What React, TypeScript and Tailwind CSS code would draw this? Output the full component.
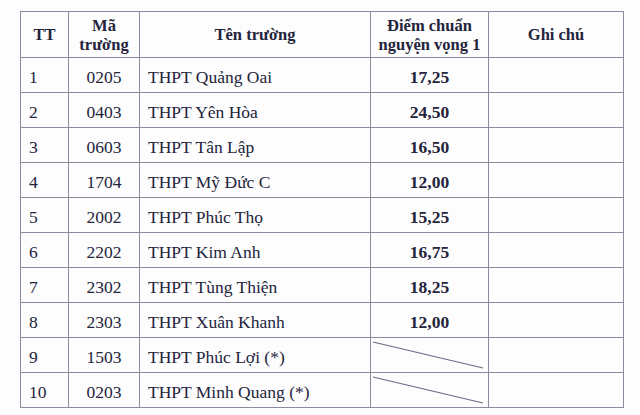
import React from "react";

const rows: { tt: string; ma: string; ten: string; diem: string | null }[] = [
  { tt: "1", ma: "0205", ten: "THPT Quảng Oai", diem: "17,25" },
  { tt: "2", ma: "0403", ten: "THPT Yên Hòa", diem: "24,50" },
  { tt: "3", ma: "0603", ten: "THPT Tân Lập", diem: "16,50" },
  { tt: "4", ma: "1704", ten: "THPT Mỹ Đức C", diem: "12,00" },
  { tt: "5", ma: "2002", ten: "THPT Phúc Thọ", diem: "15,25" },
  { tt: "6", ma: "2202", ten: "THPT Kim Anh", diem: "16,75" },
  { tt: "7", ma: "2302", ten: "THPT Tùng Thiện", diem: "18,25" },
  { tt: "8", ma: "2303", ten: "THPT Xuân Khanh", diem: "12,00" },
  { tt: "9", ma: "1503", ten: "THPT Phúc Lợi (*)", diem: null },
  { tt: "10", ma: "0203", ten: "THPT Minh Quang (*)", diem: null },
];

export default function App() {
  return (
    <div
      className="w-[640px] h-[415px] bg-[#fdfdfd] text-[#24243c] overflow-hidden pt-[11px] pl-[20px]"
      style={{ fontFamily: '"Liberation Serif", "Times New Roman", serif' }}
    >
      <div className="w-[604px] border-l border-r border-t border-[#8a8a9e]">
        <div className="flex h-[46px] border-b border-[#8a8a9e] font-bold text-[16.5px] leading-[19px]">
          <div className="w-[48px] border-r border-[#8a8a9e] flex items-center justify-center">TT</div>
          <div className="w-[71px] border-r border-[#8a8a9e] flex items-center justify-center text-center">
            Mã<br />trường
          </div>
          <div className="w-[231px] border-r border-[#8a8a9e] flex items-center justify-center">Tên trường</div>
          <div className="w-[118px] border-r border-[#8a8a9e] flex items-center justify-center text-center">
            Điểm chuẩn<br />nguyện vọng 1
          </div>
          <div className="w-[134px] flex items-center justify-center">Ghi chú</div>
        </div>
        {rows.map((r) => (
          <div key={r.tt} className="flex h-[35px] border-b border-[#8a8a9e] text-[17.5px] leading-[20px]">
            <div className="w-[48px] border-r border-[#8a8a9e] flex items-center pl-2 pt-[4px]">{r.tt}</div>
            <div className="w-[71px] border-r border-[#8a8a9e] flex items-center justify-center pt-[4px]">{r.ma}</div>
            <div className="w-[231px] border-r border-[#8a8a9e] flex items-center pl-2 pt-[4px]">{r.ten}</div>
            <div className="relative w-[118px] border-r border-[#8a8a9e] flex items-center justify-center pt-[4px] font-bold">
              {r.diem ?? (
                <svg className="absolute left-0 top-0" width="117" height="34" viewBox="0 0 117 34">
                  <line x1="2" y1="4" x2="112" y2="30" stroke="#6a6a8a" strokeWidth="1.2" />
                </svg>
              )}
            </div>
            <div className="w-[134px]"></div>
          </div>
        ))}
      </div>
    </div>
  );
}
